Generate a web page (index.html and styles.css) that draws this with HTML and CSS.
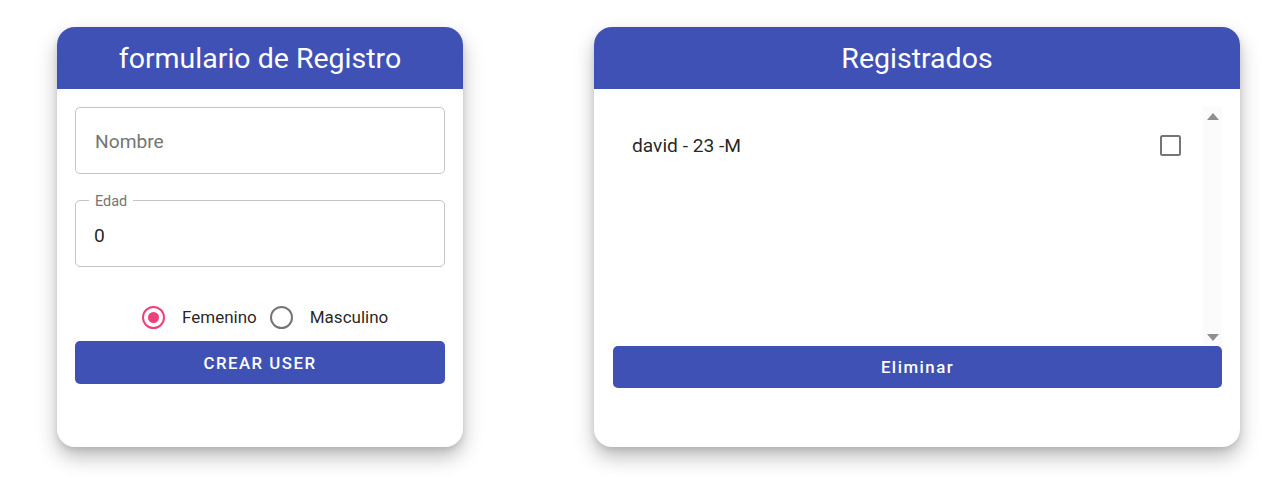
FILE: index.html
```html
<!DOCTYPE html>
<html lang="es">
<head>
<meta charset="utf-8">
<title>Registro</title>
<link rel="stylesheet" href="styles.css">
</head>
<body>
<main class="page">
  <section class="card card-form">
    <header class="card-head">formulario de Registro</header>
    <div class="card-body">
      <div class="input-box"><span class="placeholder">Nombre</span></div>
      <fieldset class="field-out">
        <legend class="field-label">Edad</legend>
        <div class="field-value">0</div>
      </fieldset>
      <div class="radio-row">
        <span class="radio radio-checked"><span class="radio-dot"></span></span>
        <span class="radio-label">Femenino</span>
        <span class="radio"></span>
        <span class="radio-label">Masculino</span>
      </div>
      <button class="btn btn-upper">Crear user</button>
    </div>
  </section>

  <section class="card card-list">
    <header class="card-head">Registrados</header>
    <div class="card-body list-body">
      <div class="list-area">
        <ul class="list">
          <li class="list-item">
            <span class="item-text">david - 23 -M</span>
            <span class="checkbox"></span>
          </li>
        </ul>
        <div class="scrollbar">
          <span class="arrow arrow-up"></span>
          <span class="arrow arrow-down"></span>
        </div>
      </div>
      <button class="btn btn-plain">Eliminar</button>
    </div>
  </section>
</main>
</body>
</html>
```

FILE: styles.css
```css
* { box-sizing: border-box; }

html, body { min-height: 477px; }

body {
  margin: 0;
  background: #ffffff;
  font-family: Roboto, "Noto Sans", Arial, sans-serif;
  color: rgba(0, 0, 0, 0.87);
}

.page {
  display: flex;
  align-items: flex-start;
  gap: 131px;
  padding: 27px 40px 30px 57px;
  min-height: 477px;
}

.card {
  height: 420px;
  background: #ffffff;
  border-radius: 18px;
  box-shadow: 0 10px 20px rgba(0, 0, 0, 0.26), 0 3px 6px rgba(0, 0, 0, 0.1);
  overflow: hidden;
  display: flex;
  flex-direction: column;
}

.card-form { width: 406px; }
.card-list { width: 646px; }

.card-head {
  height: 62px;
  flex: none;
  background: #3f51b5;
  color: #ffffff;
  font-size: 28.5px;
  font-weight: 400;
  display: flex;
  align-items: center;
  justify-content: center;
  padding-top: 1px;
}

.card-body {
  padding: 18px 18px 0 18px;
  display: flex;
  flex-direction: column;
}

.input-box {
  height: 67px;
  border: 1px solid #c4c4c4;
  border-radius: 5px;
  padding: 2px 0 0 19px;
  display: flex;
  align-items: center;
  font-size: 19.2px;
}

.placeholder { color: #757575; }

.field-out {
  margin: 17px 0 0 0;
  padding: 0 0 0 13px;
  min-width: 0;
  border: 1px solid #c4c4c4;
  border-radius: 5px;
}

.field-label {
  padding: 4px 6px 0 6px;
  font-size: 14.4px;
  line-height: 14px;
  color: #757575;
}

.field-value {
  height: 57px;
  padding: 0 0 5px 5px;
  display: flex;
  align-items: center;
  font-size: 19.2px;
  color: rgba(0, 0, 0, 0.87);
}

.radio-row {
  margin-top: 38px;
  height: 24px;
  padding-left: 67px;
  display: flex;
  align-items: center;
}

.radio {
  width: 23px;
  height: 23px;
  flex: none;
  border: 2.4px solid #757575;
  border-radius: 50%;
  display: flex;
  align-items: center;
  justify-content: center;
}

.radio-checked { border-color: #f13f79; }

.radio-dot {
  width: 11px;
  height: 11px;
  border-radius: 50%;
  background: #f13f79;
}

.radio-label {
  font-size: 17px;
  margin: 0 13px 0 17px;
  color: rgba(0, 0, 0, 0.87);
}

.btn {
  border: 0;
  border-radius: 5px;
  background: #3f51b5;
  color: #ffffff;
  font-family: Roboto, "Noto Sans", Arial, sans-serif;
  font-size: 16.8px;
  font-weight: 500;
  letter-spacing: 1.5px;
  display: flex;
  align-items: center;
  justify-content: center;
  padding: 0;
}

.btn-upper {
  margin-top: 12px;
  height: 43px;
  text-transform: uppercase;
}

.btn-plain {
  margin-top: 1px;
  height: 42px;
}

.list-body { padding: 18px 18px 0 19px; }

.list-area {
  height: 238px;
  display: flex;
}

.list {
  flex: 1;
  list-style: none;
  margin: 0;
  padding: 9px 0 0 0;
}

.list-item {
  height: 58px;
  padding: 0 22px 0 19px;
  display: flex;
  align-items: center;
  justify-content: space-between;
}

.item-text { font-size: 19.2px; }

.checkbox {
  width: 21px;
  height: 21px;
  border: 2.4px solid #757575;
  border-radius: 2.5px;
}

.scrollbar {
  width: 19px;
  flex: none;
  background: #fbfbfb;
  display: flex;
  flex-direction: column;
  justify-content: space-between;
  align-items: center;
  padding: 6px 0 4px 0;
}

.arrow {
  width: 0;
  height: 0;
  border-left: 6px solid transparent;
  border-right: 6px solid transparent;
}

.arrow-up { border-bottom: 7px solid #8e8e8e; }
.arrow-down { border-top: 7px solid #8e8e8e; }
```
